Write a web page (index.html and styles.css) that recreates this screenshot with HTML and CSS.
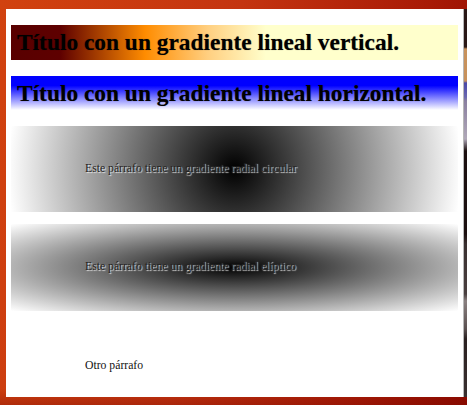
FILE: index.html
```html
<!DOCTYPE html>
<html lang="es">
<head>
<meta charset="utf-8">
<title>Gradientes</title>
<link rel="stylesheet" href="styles.css">
</head>
<body>
<div class="desktop">
  <div class="row">
    <main class="window">
      <h1 class="title title-vertical">Título con un gradiente lineal vertical.</h1>
      <h1 class="title title-horizontal">Título con un gradiente lineal horizontal.</h1>
      <p class="para para-circle">Este párrafo tiene un gradiente radial circular</p>
      <p class="para para-ellipse">Este párrafo tiene un gradiente radial elíptico</p>
      <p class="para para-plain">Otro párrafo</p>
    </main>
    <div class="strip"></div>
  </div>
</div>
</body>
</html>
```

FILE: styles.css
```css
html, body {
  margin: 0;
  padding: 0;
  width: 467px;
  height: 405px;
  overflow: hidden;
}

.desktop {
  box-sizing: border-box;
  width: 467px;
  height: 405px;
  padding: 9px 0 8px 6px;
  background:
    linear-gradient(to bottom, rgba(0,0,0,0) 96%, rgba(120,10,0,0.35) 100%),
    linear-gradient(100deg, #d1420f 0%, #c43410 45%, #a81a06 80%, #8f0a00 100%);
}

.row {
  display: flex;
  height: 388px;
}

.window {
  box-sizing: border-box;
  width: 458px;
  height: 388px;
  background: #fff;
  border-right: 1px solid #b8b8b8;
  padding: 16px 5px 0 5px;
  font-family: "Liberation Serif", "Times New Roman", serif;
  overflow: hidden;
}

.strip {
  flex: 1;
  background: linear-gradient(to bottom,
    #2a1816 0px, #2a1816 38px,
    #c8925c 40px, #c8925c 72px,
    #4a48a8 74px, #6a68b0 88px,
    #8a80a0 92px, #b0a8b8 130px,
    #1c1010 142px, #1c1010 225px,
    #3a3030 235px, #4a4040 285px,
    #8a8080 292px, #5a5050 320px,
    #2a2020 330px, #3a3030 388px);
}

.title {
  margin: 0 0 16px 0;
  padding: 4px 6px 4px 6px;
  font-size: 23.4px;
  font-weight: bold;
  line-height: 27px;
  color: #000;
  text-shadow: 0 0 1px rgba(0, 0, 0, 0.45);
  white-space: nowrap;
}

.title-vertical {
  background: linear-gradient(to right, #580000 0%, #5e0000 11%, #ff8c00 30%, #ffcf80 44%, #ffffcc 57%, #ffffcc 100%);
}

.title-horizontal {
  padding-top: 4px;
  padding-bottom: 3px;
  background: linear-gradient(to bottom, #0000ff 0%, #0000ff 28%, #ffffff 100%);
}

.para {
  margin: 0 0 12px 0;
  padding: 36px 0 36px 74px;
  font-size: 11.7px;
  line-height: 14px;
  color: #222;
  text-shadow: 1px 1px 1px rgba(255, 255, 255, 0.85);
}

.para-circle {
  background: radial-gradient(circle, #000000 0%, #ffffff 100%);
}

.para-ellipse {
  padding-bottom: 37px;
  background: radial-gradient(ellipse, #000000 0%, #ffffff 100%);
}

.para-plain {
  color: #111;
  text-shadow: none;
}
```
